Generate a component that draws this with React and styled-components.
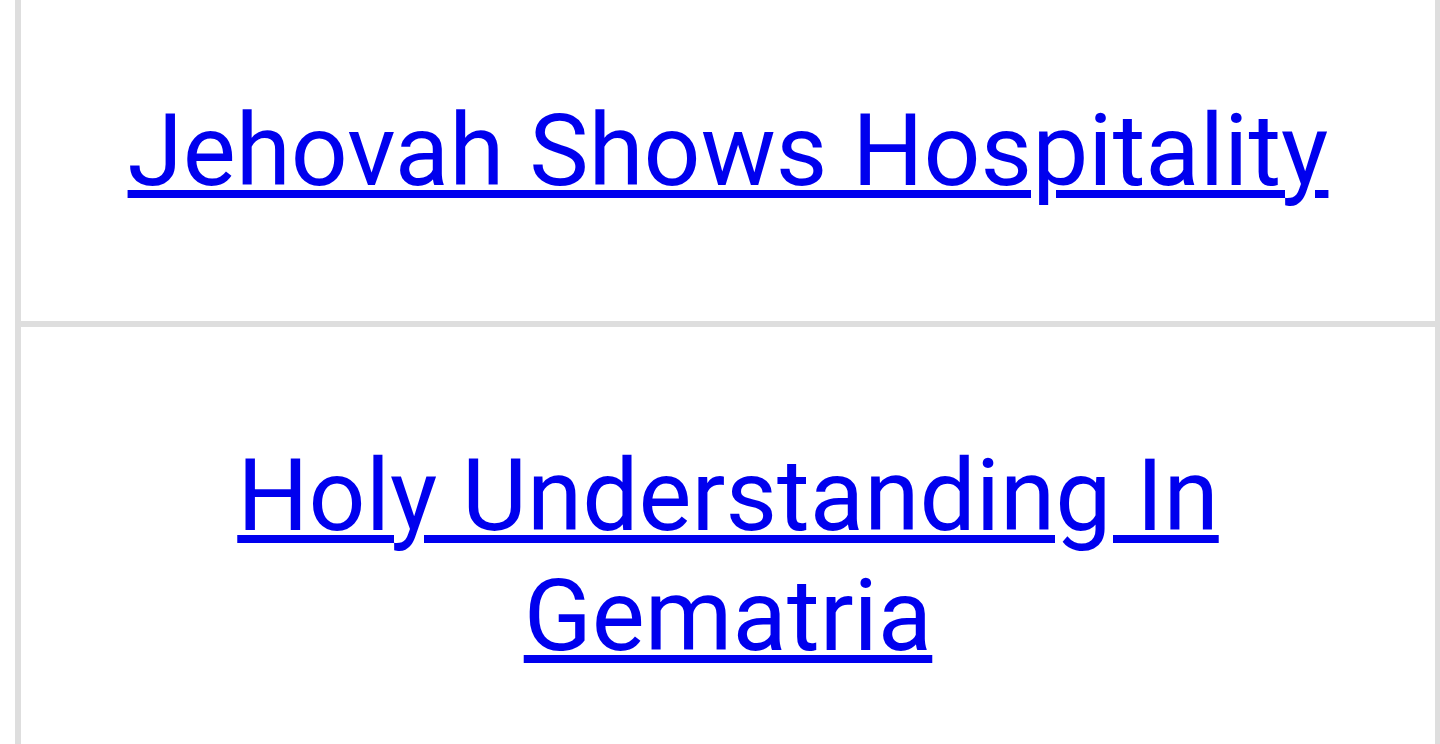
import React from 'react'
import styled, { createGlobalStyle } from 'styled-components';

const GlobalStyle = createGlobalStyle`
  html, body {
    margin: 0;
    padding: 0;
    background: #ffffff;
    overflow: hidden;
  }
  body {
    font-family: Roboto, "Noto Sans", sans-serif;
  }
`;

const Page = styled.div`
  padding-left: 15px;
  height: 744px;
  overflow: hidden;
`;

const TopicList = styled.ul`
  list-style: none;
  margin: -18px 0 0 0;
  padding: 0;
  border-left: 6px solid #dedede;
  border-right: 5px solid #dedede;
`;

const TopicItem = styled.li`
  padding: 109px 40px 110px;
  text-align: center;
  border-bottom: 6px solid #dedede;
`;

const TopicLink = styled.a`
  font-size: 100px;
  line-height: 120px;
  color: #0000ee;
  text-decoration: underline;
  text-decoration-thickness: 8px;
  text-underline-offset: 5px;
`;

const topics = [
  'Jehovah Shows Hospitality',
  'Holy Understanding In Gematria',
];

function App() {
  return (
    <Page>
      <GlobalStyle />
      <TopicList>
        {topics.map((t) => (
          <TopicItem key={t}>
            <TopicLink href='#'>{t}</TopicLink>
          </TopicItem>
        ))}
      </TopicList>
    </Page>
  )
}

export default App
